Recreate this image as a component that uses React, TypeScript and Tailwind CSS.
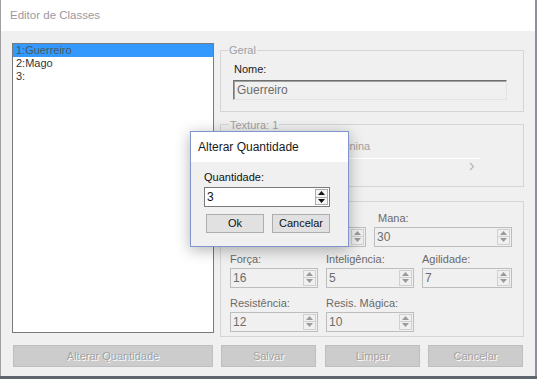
import React from 'react'

const font = "font-['Liberation_Sans',Arial,sans-serif]"

function Tri({ up, color }: { up: boolean; color: string }) {
  return (
    <svg width="7" height="4" viewBox="0 0 7 4">
      <path d={up ? 'M3.5 0L7 4H0z' : 'M0 0h7L3.5 4z'} fill={color} />
    </svg>
  )
}

function Spin({ value, width, enabled }: { value: string; width: string; enabled?: boolean }) {
  const box = enabled ? 'border-[#7a7a7a] bg-white' : 'border-[#bdbdbd] bg-[#f0f0f0]'
  const txt = enabled ? 'text-[#111]' : 'text-[#6d6d6d]'
  const arrow = enabled ? '#111' : '#9a9a9a'
  const half = enabled ? 'border-[#adadad] bg-[#f4f4f4]' : 'border-[#d0d0d0] bg-[#f0f0f0]'
  return (
    <div className={`flex h-[20px] border ${width} ${box}`}>
      <span className={`flex-1 pl-[2px] text-[12px] leading-[18px] ${txt}`}>{value}</span>
      <div className="my-[1px] mr-[1px] flex w-[13px] flex-col">
        <div className={`flex flex-1 items-center justify-center border ${half}`}>
          <Tri up color={arrow} />
        </div>
        <div className={`flex flex-1 items-center justify-center border border-t-0 ${half}`}>
          <Tri up={false} color={arrow} />
        </div>
      </div>
    </div>
  )
}

function Field({ label, children, labelClass = '' }: { label: string; children: React.ReactNode; labelClass?: string }) {
  return (
    <div className="flex flex-col">
      <span className={`h-[14px] text-[11px] leading-[14px] text-[#6a6a6a] ${labelClass}`}>{label}</span>
      <div className="mt-[2px]">{children}</div>
    </div>
  )
}

function DisabledButton({ label, width }: { label: string; width: string }) {
  return (
    <div
      className={`flex h-[22px] items-center justify-center border border-[#bfbfbf] bg-[#cccccc] text-[11px] text-[#a3a3a3] [text-shadow:1px_1px_0_#ffffff] ${width}`}
    >
      {label}
    </div>
  )
}

export default function App() {
  const classes = ['1:Guerreiro', '2:Mago', '3:']

  return (
    <div className={`relative h-[379px] w-[537px] overflow-hidden bg-[#5f6670] ${font}`}>
      <div className="flex h-[376px] w-[537px] flex-col border-l border-r-2 border-l-[#a0a0a0] border-r-[#8c9199]">
        {/* title bar */}
        <div className="flex h-[31px] items-center bg-white pl-[9px] text-[11.5px] text-[#9c98a2]">
          Editor de Classes
        </div>

        {/* body */}
        <div className="flex flex-1 flex-col bg-[#f0f0f0] pl-[11px] pt-[12px]">
          <div className="flex h-[294px] gap-[6px]">
            <div className="h-[290px] w-[202px] border border-[#7a7a7a] bg-white">
              {classes.map((c, i) => (
                <div
                  key={c}
                  className={`pl-[3px] text-[11px] leading-[13px] ${
                    i === 0 ? 'bg-[#3399ff] text-[#4d5663]' : 'text-[#333]'
                  }`}
                >
                  {c}
                </div>
              ))}
            </div>

            <div className="flex w-[304px] flex-col">
              <fieldset className="h-[69px] border border-[#d5d5d5]">
                <legend className="ml-[7px] px-[1px] text-[11px] leading-[14px] text-[#a0a0a0]">Geral</legend>
                <div className="mt-[6px] pl-[13px] text-[11px] leading-[13px] text-[#222]">Nome:</div>
                <div className="ml-[12px] mt-[4px] flex h-[20px] w-[274px] items-center border border-b-[#e3e3e3] border-l-[#7a7a7a] border-r-[#e3e3e3] border-t-[#6e6e6e] bg-[#f0f0f0] pl-[3px] text-[12px] text-[#6d6d6d] shadow-[inset_1px_1px_0_#a0a0a0]">
                  Guerreiro
                </div>
              </fieldset>

              <fieldset className="mt-[6px] h-[69px] border border-[#d5d5d5]">
                <legend className="ml-[8px] px-[1px] text-[11px] leading-[14px] text-[#a0a0a0]">Textura: 1</legend>
                <div className="mt-[8px] pl-[104px] text-[11px] leading-[13px] text-[#a0a0a0]">Feminina</div>
                <div className="ml-[19px] mt-[5px] flex h-[17px] w-[240px] items-center justify-end border-t border-white pr-[5px]">
                  <svg width="6" height="9" viewBox="0 0 6 9">
                    <path d="M1 1l3.5 3.5L1 8" fill="none" stroke="#b4b4b4" strokeWidth="1.2" />
                  </svg>
                </div>
              </fieldset>

              <div className="mt-[14px] flex h-[137px] flex-col border border-[#d5d5d5] pl-[8px] pt-[9px]">
                <div className="flex gap-[8px]">
                  <Field label="">
                    <Spin value="" width="w-[137px]" />
                  </Field>
                  <Field label="Mana:" labelClass="pl-[4px]">
                    <Spin value="30" width="w-[138px]" />
                  </Field>
                </div>
                <div className="mt-[5px] flex gap-[8px] pl-[1px]">
                  <Field label="Força:">
                    <Spin value="16" width="w-[88px]" />
                  </Field>
                  <Field label="Inteligência:">
                    <Spin value="5" width="w-[88px]" />
                  </Field>
                  <Field label="Agilidade:">
                    <Spin value="7" width="w-[90px]" />
                  </Field>
                </div>
                <div className="mt-[8px] flex gap-[8px] pl-[1px]">
                  <Field label="Resistência:">
                    <Spin value="12" width="w-[88px]" />
                  </Field>
                  <Field label="Resis. Mágica:">
                    <Spin value="10" width="w-[88px]" />
                  </Field>
                </div>
              </div>
            </div>
          </div>

          <div className="mt-[8px] flex pl-[1px]">
            <DisabledButton label="Alterar Quantidade" width="w-[200px]" />
            <div className="ml-[8px]">
              <DisabledButton label="Salvar" width="w-[95px]" />
            </div>
            <div className="ml-[9px]">
              <DisabledButton label="Limpar" width="w-[95px]" />
            </div>
            <div className="ml-[8px]">
              <DisabledButton label="Cancelar" width="w-[95px]" />
            </div>
          </div>
        </div>
      </div>

      {/* modal dialog */}
      <div className="absolute left-[190px] top-[131px] flex h-[116px] w-[159px] flex-col border border-[#7f95cc] bg-[#f0f0f0] shadow-[0_3px_14px_rgba(0,0,0,0.3)]">
        <div className="flex h-[30px] items-center bg-white pl-[7px] text-[12px] text-[#1a1a1a]">
          Alterar Quantidade
        </div>
        <div className="flex flex-col pl-[13px] pt-[9px]">
          <span className="text-[11px] leading-[13px] text-[#111]">Quantidade:</span>
          <div className="mt-[3px]">
            <Spin value="3" width="w-[126px]" enabled />
          </div>
          <div className="ml-[2px] mt-[7px] flex gap-[8px]">
            <button className="h-[19px] w-[58px] border border-[#adadad] bg-[#e1e1e1] text-[11px] text-[#111]">
              Ok
            </button>
            <button className="h-[19px] w-[58px] border border-[#adadad] bg-[#e1e1e1] text-[11px] text-[#111]">
              Cancelar
            </button>
          </div>
        </div>
      </div>
    </div>
  )
}
